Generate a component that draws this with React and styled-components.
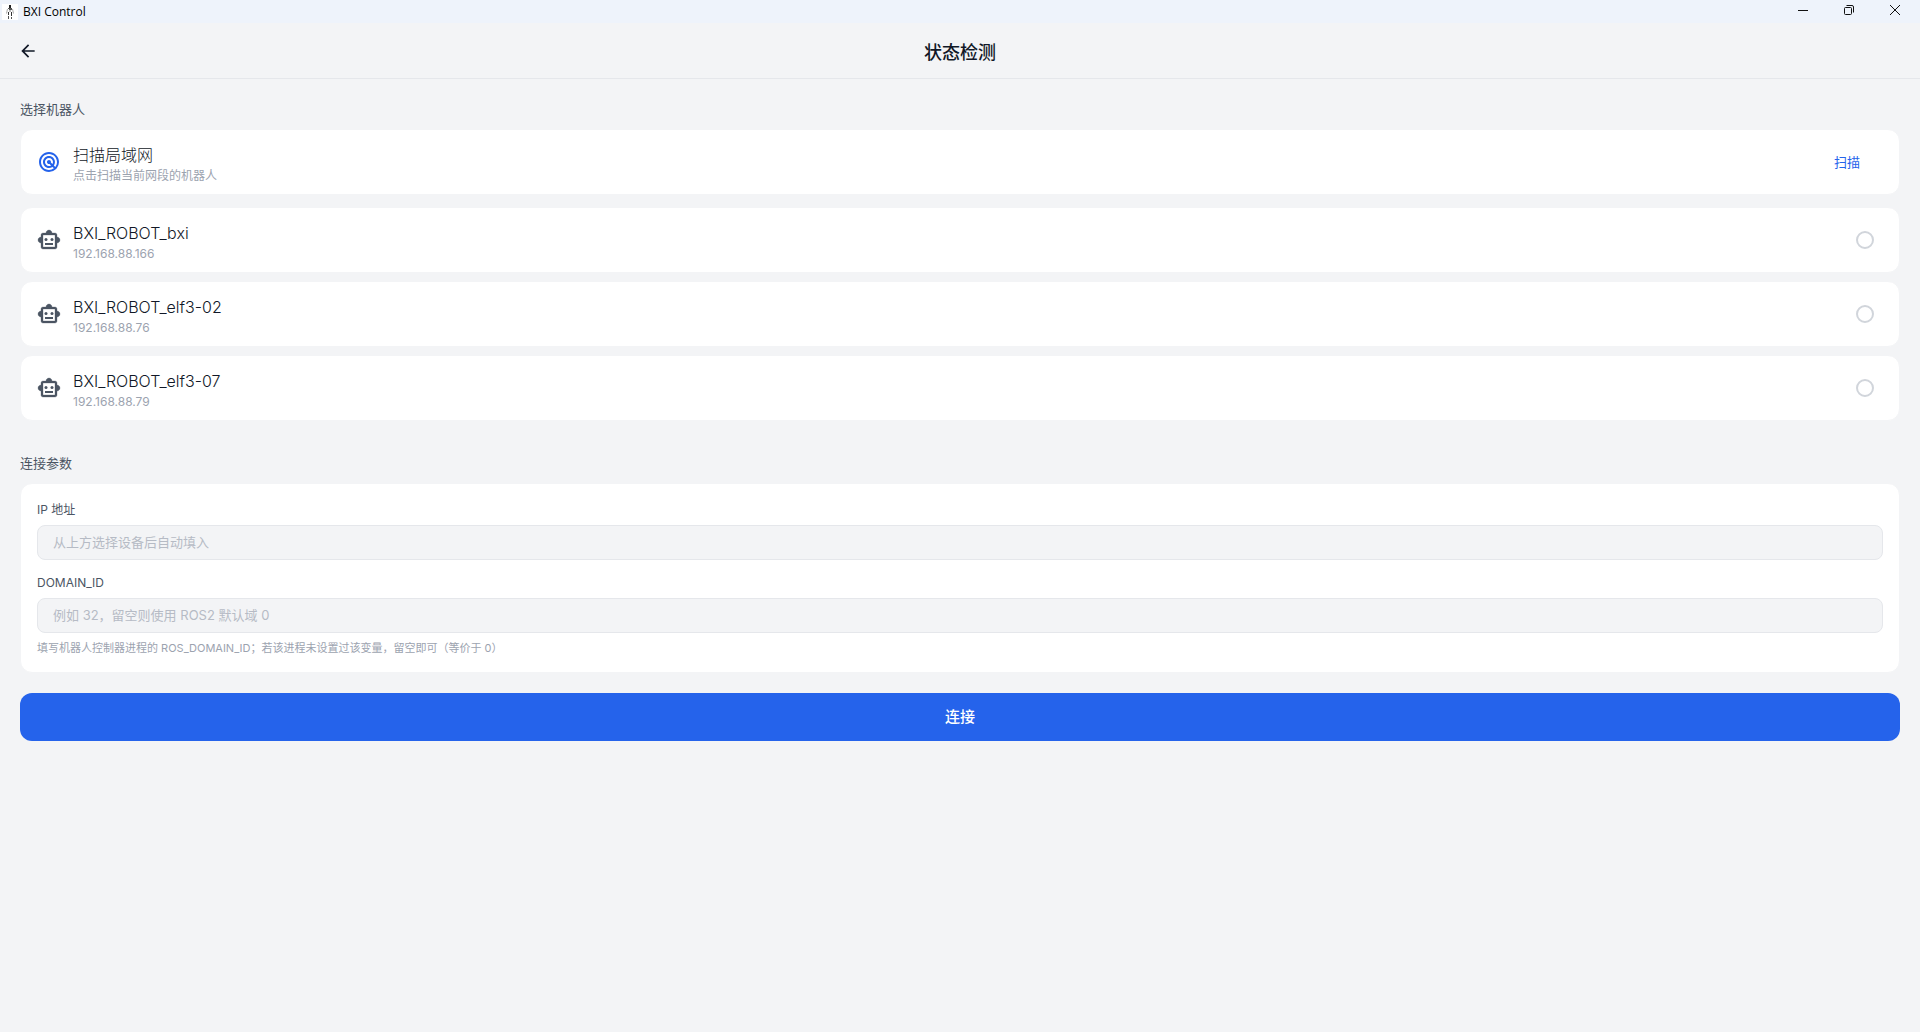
import React, { useState } from 'react';
import styled, { createGlobalStyle } from 'styled-components';
import { MdArrowBack, MdRadar } from 'react-icons/md';

const robots = [
  { name: 'BXI_ROBOT_bxi', ip: '192.168.88.166' },
  { name: 'BXI_ROBOT_elf3-02', ip: '192.168.88.76' },
  { name: 'BXI_ROBOT_elf3-07', ip: '192.168.88.79' },
];

export default function App() {
  const [selected, setSelected] = useState('');
  const [domainId, setDomainId] = useState('');

  return (
    <>
      <GlobalStyle />
      <TitleBar>
        <AppIcon />
        <WindowTitle>BXI Control</WindowTitle>
        <WindowButton aria-label="最小化">
          <svg width="10" height="10" viewBox="0 0 10 10"><path d="M0 5.5h10" /></svg>
        </WindowButton>
        <WindowButton aria-label="还原">
          <svg width="10" height="10" viewBox="0 0 10 10">
            <rect x="0.5" y="2.5" width="7" height="7" rx="1" />
            <path d="M2.5 0.5H8a1.5 1.5 0 0 1 1.5 1.5v5.5" />
          </svg>
        </WindowButton>
        <WindowButton aria-label="关闭">
          <svg width="10" height="10" viewBox="0 0 10 10"><path d="M0 0l10 10M10 0L0 10" /></svg>
        </WindowButton>
      </TitleBar>
      <Header>
        <BackButton aria-label="返回"><MdArrowBack size={20} /></BackButton>
        <PageTitle>状态检测</PageTitle>
      </Header>
      <Content>
        <SectionTitle>选择机器人</SectionTitle>
        <ScanCard>
          <CardIcon $color="#2563eb"><MdRadar size={24} /></CardIcon>
          <CardText>
            <CardName>扫描局域网</CardName>
            <CardInfo>点击扫描当前网段的机器人</CardInfo>
          </CardText>
          <ScanButton>扫描</ScanButton>
        </ScanCard>
        <RobotList>
          {robots.map((robot) => (
            <RobotCard key={robot.ip}>
              <CardIcon $color="#4b5563"><RobotIcon /></CardIcon>
              <CardText>
                <CardName>{robot.name}</CardName>
                <CardInfo>{robot.ip}</CardInfo>
              </CardText>
              <Radio
                name="robot"
                value={robot.ip}
                checked={selected === robot.ip}
                onChange={() => setSelected(robot.ip)}
              />
            </RobotCard>
          ))}
        </RobotList>
        <SectionTitle>连接参数</SectionTitle>
        <FormCard>
          <Field>
            <FieldLabel htmlFor="ip">IP 地址</FieldLabel>
            <TextInput id="ip" value={selected} readOnly placeholder="从上方选择设备后自动填入" />
          </Field>
          <Field>
            <FieldLabel htmlFor="domain">DOMAIN_ID</FieldLabel>
            <TextInput
              id="domain"
              value={domainId}
              onChange={(e) => setDomainId(e.target.value)}
              placeholder="例如 32，留空则使用 ROS2 默认域 0"
            />
          </Field>
          <Hint>填写机器人控制器进程的 ROS_DOMAIN_ID；若该进程未设置过该变量，留空即可（等价于 0）</Hint>
        </FormCard>
        <ConnectButton>连接</ConnectButton>
      </Content>
    </>
  );
}

function AppIcon() {
  return (
    <svg width="16" height="16" viewBox="0 0 16 16">
      <rect width="16" height="16" fill="#fff" />
      <path d="M7 1h2v3H7z" fill="#222" />
      <path d="M6 4h4v1H6zM7 5h3v1H7z" fill="#555" />
      <path d="M5.5 5L4.5 9.5M10.5 5l1 4.5" stroke="#aaa" fill="none" />
      <path d="M7 6h2v2H7z" fill="#bbb" />
      <path d="M6 8h1v3H6zM9 8h1v4H9z" fill="#333" />
      <path d="M6 12h1v3H6zM9 13h1v2H9z" fill="#555" />
    </svg>
  );
}

function RobotIcon() {
  return (
    <svg width="24" height="24" viewBox="0 0 24 24" fill="currentColor">
      <path
        stroke="currentColor"
        strokeWidth="0.3"
        d="M20 9V7c0-1.1-.9-2-2-2h-3c0-1.66-1.34-3-3-3S9 3.34 9 5H6c-1.1 0-2 .9-2 2v2c-1.66 0-3 1.34-3 3s1.34 3 3 3v4c0 1.1.9 2 2 2h12c1.1 0 2-.9 2-2v-4c1.66 0 3-1.34 3-3s-1.34-3-3-3zm-2 10H6V7h12v12z"
      />
      <circle cx="9" cy="11.5" r="1.5" />
      <circle cx="15" cy="11.5" r="1.5" />
      <path d="M8 15h8v2H8z" />
    </svg>
  );
}

const GlobalStyle = createGlobalStyle`
  * {
    box-sizing: border-box;
  }

  body {
    margin: 0;
    background: #f3f4f6;
    color: #111827;
    font-family: Inter, 'Noto Sans CJK SC', sans-serif;
  }

  button, input {
    font-family: inherit;
  }

  button {
    border: none;
    background: none;
    padding: 0;
    cursor: pointer;
  }
`;

const TitleBar = styled.div`
  display: flex;
  align-items: center;
  height: 23px;
  padding: 0 2px;
  background: #eef3fb;
`;

const WindowTitle = styled.span`
  flex: 1;
  margin-left: 5px;
  color: #000;
  font-family: 'Open Sans', 'Noto Sans', sans-serif;
  font-size: 12px;
  line-height: 20px;
`;

const WindowButton = styled.button`
  display: flex;
  align-items: center;
  justify-content: center;
  align-self: flex-start;
  width: 46px;
  height: 20px;

  svg {
    fill: none;
    stroke: #111;
  }
`;

const Header = styled.header`
  display: grid;
  grid-template-columns: 20px 1fr 20px;
  align-items: center;
  height: 56px;
  padding: 0 18px;
  border-bottom: 1px solid #e5e7eb;
`;

const BackButton = styled.button`
  display: flex;
  color: #111827;
`;

const PageTitle = styled.h1`
  margin: 0;
  padding-top: 4px;
  text-align: center;
  font-size: 18px;
  line-height: 24px;
  font-weight: 500;
`;

const Content = styled.main`
  display: flex;
  flex-direction: column;
  padding: 20px;
`;

const SectionTitle = styled.h2`
  margin: 0 0 10px;
  color: #4b5563;
  font-size: 13px;
  line-height: 20px;
  font-weight: 400;
`;

const Card = styled.div`
  background: #fff;
  border: 1px solid #f3f4f6;
  border-radius: 12px;
`;

const ScanCard = styled(Card)`
  display: flex;
  align-items: center;
  gap: 12px;
  padding: 8px 16px;
  margin-bottom: 12px;
`;

const RobotCard = styled(ScanCard).attrs({ as: 'label' })`
  margin-bottom: 0;
  cursor: pointer;
`;

const RobotList = styled.div`
  display: flex;
  flex-direction: column;
  gap: 8px;
  margin-bottom: 32px;
`;

const CardIcon = styled.span`
  display: flex;
  color: ${(p) => p.$color};
`;

const CardText = styled.div`
  flex: 1;
  padding-top: 6px;
`;

const CardName = styled.div`
  font-size: 16px;
  line-height: 22px;
  font-weight: 300;
`;

const CardInfo = styled.div`
  color: #9ca3af;
  font-size: 12px;
  line-height: 20px;
`;

const ScanButton = styled.button`
  padding: 8px 23px;
  color: #2563eb;
  font-size: 13px;
  line-height: 20px;
`;

const Radio = styled.input.attrs({ type: 'radio' })`
  appearance: none;
  width: 18px;
  height: 18px;
  margin: 0 9px 0 0;
  border: 2px solid #d1d5db;
  border-radius: 50%;

  &:checked {
    border: 5px solid #2563eb;
  }
`;

const FormCard = styled(Card)`
  padding: 17px 16px 15px;
  margin-bottom: 20px;
`;

const Field = styled.div`
  display: flex;
  flex-direction: column;
  gap: 6px;
  margin-bottom: 14px;

  &:nth-child(2) {
    margin-bottom: 6px;
  }
`;

const FieldLabel = styled.label`
  color: #4b5563;
  font-size: 12px;
  line-height: 18px;
`;

const TextInput = styled.input`
  width: 100%;
  height: 35px;
  padding: 0 15px 2px;
  background: #f3f4f6;
  border: 1px solid #e5e7eb;
  border-radius: 8px;
  color: #111827;
  font-size: 13px;
  outline: none;

  &::placeholder {
    color: #b6bbc5;
  }

  &:focus {
    border-color: #2563eb;
  }
`;

const Hint = styled.p`
  margin: 0;
  color: #9ca3af;
  font-size: 11px;
  line-height: 18px;
`;

const ConnectButton = styled.button`
  height: 48px;
  padding-bottom: 3px;
  background: #2563eb;
  border-radius: 12px;
  color: #fff;
  font-size: 15px;
  font-weight: 500;
`;
